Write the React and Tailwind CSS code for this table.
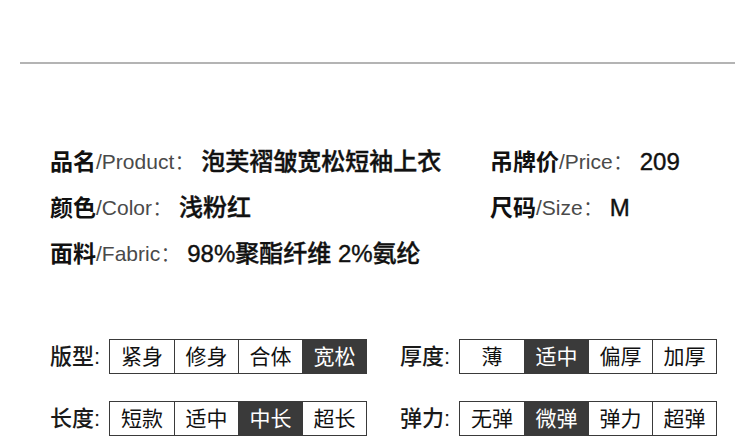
import React from 'react';

const cjk = "font-['Liberation_Sans','Noto_Sans_CJK_SC',sans-serif]";

// Info row: bold Chinese label + grey English + value
const InfoItem = ({ zh, en, value }) => (
    <div className={`flex items-center h-[46px] whitespace-nowrap ${cjk}`}>
        <span className="text-[23px] font-bold text-[#111]">{zh}</span>
        <span className="text-[21px] text-[#4a4a4a] font-light">/{en}</span>
        <span className="text-[21px] text-[#4a4a4a] font-light">：</span>
        <span className="text-[24px] font-medium text-[#111] ml-[6px] [-webkit-text-stroke:0.4px_#111]">{value}</span>
    </div>
);

const OptionRow = ({ label, options, active }) => (
    <div className={`flex items-center ${cjk}`}>
        <span className="text-[22px] font-medium text-[#1a1a1a] w-[59px] shrink-0">{label}:</span>
        <div className="flex h-[35px] border border-[#3a3a3a]">
            {options.map((o, i) => (
                <div
                    key={o}
                    className={`w-[64px] flex items-center justify-center text-[21px] ${i > 0 ? 'border-l border-[#3a3a3a]' : ''} ${i === active ? 'bg-[#3a3a3a] text-white' : 'bg-white text-[#111]'}`}
                >
                    {o}
                </div>
            ))}
        </div>
    </div>
);

export default function App() {
    return (
        <div className="w-[750px] h-[445px] bg-white overflow-hidden">
            {/* top rule */}
            <div className="pt-[62px] pl-[20px] pr-[15px]">
                <div className="h-[2px] bg-[#b4b4b4]" />
            </div>

            {/* product info */}
            <div className="mt-[75px] pl-[50px] grid grid-cols-[440px_1fr]">
                <InfoItem zh="品名" en="Product" value="泡芙褶皱宽松短袖上衣" />
                <InfoItem zh="吊牌价" en="Price" value="209" />
                <InfoItem zh="颜色" en="Color" value="浅粉红" />
                <InfoItem zh="尺码" en="Size" value="M" />
                <InfoItem zh="面料" en="Fabric" value="98%聚酯纤维 2%氨纶" />
            </div>

            {/* attribute options */}
            <div className="mt-[62px] pl-[50px] grid grid-cols-[350px_1fr] gap-y-[27px]">
                <OptionRow label="版型" options={['紧身', '修身', '合体', '宽松']} active={3} />
                <OptionRow label="厚度" options={['薄', '适中', '偏厚', '加厚']} active={1} />
                <OptionRow label="长度" options={['短款', '适中', '中长', '超长']} active={2} />
                <OptionRow label="弹力" options={['无弹', '微弹', '弹力', '超弹']} active={1} />
            </div>
        </div>
    );
}
